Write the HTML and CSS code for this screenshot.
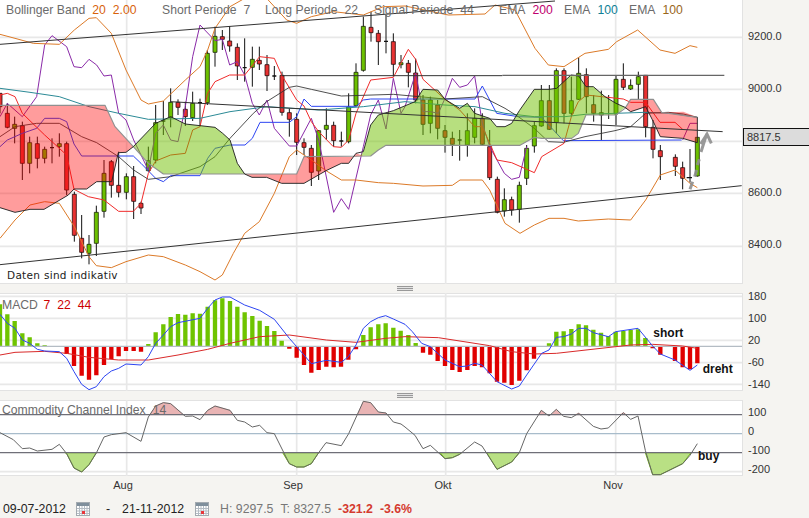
FILE: index.html
```html
<!DOCTYPE html>
<html lang="de">
<head>
<meta charset="utf-8">
<title>Chart</title>
<link rel="stylesheet" href="styles.css">
</head>
<body>
<main class="chart">
  <section class="pane pane-main">
    <div class="plot">
      <svg class="plot-svg" viewBox="0 0 2226 852" width="742" height="284">
        <g class="grid">
          <path d="M0 112H2226M0 268H2226M0 424H2226M0 580H2226M0 739H2226M380 0V852M890 0V852M1337 0V852M1847 0V852"/>
        </g>
        <path class="wick" d="M0 280V340M22 310V385M44 350V430M67 365V540M89 410V520M112 410V505M134 440V490M156 415V490M178 400V470M200 425V585M223 575V725M245 645V775M267 705V793M289 617V768M312 480V653M334 480V593M356 455V592M379 520V598M401 498V657M423 605V642M445 440V515M467 315V490M490 303V405M512 265V382M534 298V345M556 305V378M578 275V363M600 296V378M622 150V315M645 80V200M667 90V150M689 78V155M712 130V240M734 115V245M757 140V260M778 140V210M801 165V273M823 198V240M846 215V347M868 325V410M890 340V465M912 415V465M934 435V558M956 390V540M979 325V420M1001 365V440M1024 395V440M1046 280V430M1068 190V320M1090 50V215M1113 35V125M1135 90V195M1158 45V160M1180 100V230M1203 165V205M1225 180V262M1247 176V310M1269 285V405M1291 290V400M1313 300V418M1335 375V458M1357 395V468M1379 390V482M1402 340V470M1424 325V430M1447 340V435M1469 390V540M1492 530V640M1513 565V650M1535 590V647M1558 545V668M1580 435V555M1603 365V458M1624 255V380M1648 255V390M1669 205V400M1692 205V370M1714 230V350M1736 172V300M1759 205V340M1781 285V365M1804 272V420M1826 285V357M1848 225V375M1870 190V270M1892 238V270M1915 215V300M1937 225V412M1959 360V475M1981 435V540M2026 463V528M2048 485V568M2070 447V548M2092 412V530"/>
        <path class="body-green" d="M261 733h12v27h-12zM283 637h12v93h-12zM306 520h12v114h-12zM373 530h12v47h-12zM439 482h12v30h-12zM461 368h12v112h-12zM506 307h12v45h-12zM572 310h12v43h-12zM616 160h12v148h-12zM639 109h12v48h-12zM751 178h12v24h-12zM950 392h12v121h-12zM973 376h12v12h-12zM1040 321h12v104h-12zM1062 217h12v100h-12zM1084 79h12v132h-12zM1197 188h12v6h-12zM38 373h12v12h-12zM83 428h12v62h-12zM128 448h12v27h-12zM172 431h12v9h-12zM1285 300h12v70h-12zM1396 392h12v43h-12zM1418 355h12v57h-12zM1507 599h12v34h-12zM1552 556h12v72h-12zM1574 445h12v90h-12zM1597 377h12v61h-12zM1618 302h12v76h-12zM1663 212h12v155h-12zM1708 302h12v38h-12zM1730 220h12v78h-12zM1798 338h12v7h-12zM1842 238h12v104h-12zM1886 256h12v11h-12zM1909 230h12v23h-12zM2086 412h12v116h-12z"/>
        <path class="body-red" d="M-6 280h12v40h-12zM16 340h12v42h-12zM61 377h12v113h-12zM106 431h12v44h-12zM194 431h12v139h-12zM217 583h12v123h-12zM239 715h12v42h-12zM328 485h12v71h-12zM350 556h12v21h-12zM395 530h12v74h-12zM417 610h12v14h-12zM528 307h12v15h-12zM550 328h12v22h-12zM661 110h12v8h-12zM683 123h12v15h-12zM706 142h12v56h-12zM772 181h12v11h-12zM795 194h12v33h-12zM840 226h12v111h-12zM862 338h12v20h-12zM884 358h12v69h-12zM906 428h12v14h-12zM928 445h12v72h-12zM995 376h12v46h-12zM1107 82h12v16h-12zM1129 100h12v25h-12zM1174 125h12v68h-12zM1219 190h12v27h-12zM1241 219h12v81h-12zM1263 300h12v73h-12zM1307 315h12v70h-12zM1329 392h12v20h-12zM1351 415h12v18h-12zM1441 355h12v78h-12zM1463 440h12v93h-12zM1486 538h12v99h-12zM1529 599h12v31h-12zM1642 302h12v86h-12zM1686 212h12v128h-12zM1753 224h12v66h-12zM1775 314h12v26h-12zM1864 238h12v24h-12zM1931 226h12v154h-12zM1953 382h12v66h-12zM1975 452h12v18h-12zM2020 472h12v27h-12zM2042 503h12v32h-12z"/>
        <path class="dash" d="M150 443h12M484 363h12M594 308h12M728 203h12M817 228h12M1018 423h12M1152 124h12M1373 420h12M2060 533h16"/>
        <polyline class="ln purple" points="0,350 22,310 67,350 110,290 134,135 156,107 200,140 222,200 245,203 267,178 290,195 312,228 334,225 356,340 378,360 401,420 445,510 467,400 490,375 512,420 534,425 556,320 578,170 600,75 645,122 667,118 689,195 712,185 734,225 757,310 778,345 801,300 823,385 868,438 890,438 934,355 956,420 1001,637 1024,596 1046,628 1090,440 1112,345 1135,300 1158,387 1180,235 1203,340 1215,320 1247,220 1269,335 1291,335 1315,340 1335,295 1357,235 1379,262 1402,255 1424,228 1447,370 1469,440 1513,520 1535,538 1558,532 1580,440"/>
        <polyline class="ln purple" points="2048,420 2070,370 2092,370"/>
        <polyline class="ln blue" points="0,440 22,420 67,400 110,385 134,355 178,355 200,365 222,432 245,468 400,468 423,490 467,535 490,545 512,527 600,527 623,475 645,445 690,435 735,435 757,415 780,367 868,367 890,350 912,297 934,319 1068,319 1090,300 1112,297 1425,297 1447,258 1490,340 1555,350 1625,352 1690,422 2045,420"/>
        <polyline class="ln red" points="0,285 22,280 45,290 67,340 134,405 200,465 222,568 265,590 312,600 356,634 400,634 423,610 445,520 467,483 512,465 556,460 578,390 600,380 623,280 645,245 689,225 734,225 779,170 823,175 845,225 890,300 912,318 934,365 956,395 1000,440 1024,442 1046,420 1068,340 1112,240 1180,232 1225,148 1247,178 1269,238 1335,298 1379,330 1424,380 1447,380 1491,480 1535,488 1603,518 1625,470 1692,430 1714,350 1735,305 1759,285 1870,297 1892,307 1937,307 1980,367 2025,367 2048,388"/>
        <polyline class="ln orange" points="0,103 45,115 100,130 178,133 223,90 267,55 289,53 334,100 378,210 423,300 445,312 490,303 556,240 600,200 623,150 645,85 690,20 734,-5 800,-5 860,60 890,70 934,50 1000,35 1090,45 1150,20 1215,18 1345,45 1455,42 1485,15 1545,30 1605,145 1645,195 1692,200 1755,160 1825,148 1850,125 1913,90 1980,150 2025,160 2070,137 2092,142"/>
        <polyline class="ln orange" points="0,715 45,660 90,615 134,605 178,610 223,680 267,770 289,797 334,803 378,785 445,765 490,770 556,795 600,815 645,840 667,825 700,760 734,700 778,665 823,580 868,470 890,450 934,480 978,512 1024,540 1068,540 1135,548 1180,550 1269,558 1357,556 1380,540 1447,540 1469,570 1492,620 1515,670 1560,700 1603,675 1647,655 1692,655 1735,663 1825,657 1892,660 1937,600 1981,525 2025,510 2070,550 2092,563"/>
        <polyline class="ln teal" points="0,265 90,277 178,290 267,320 356,340 445,358 600,355 690,335 800,320 956,330 1090,320 1215,305 1335,315 1425,320 1515,340 1603,350 1695,350 1755,343 1935,337 2015,340 2092,352"/>
        <polyline class="ln thin" points="0,410 45,380 110,370 178,370 245,410 290,428 356,470 401,510 445,538 512,530 600,500 645,470 690,415 760,340 800,305 868,262 890,258 934,268 1024,288 1180,283 1335,297 1447,290 1515,325 1555,350 1603,385 1645,425 1690,427 1755,410 1845,392 1892,380 1937,340 2005,337 2050,342 2092,352"/>
        <polygon class="cloud-red" points="0,316 315,316 345,380 400,440 378,457 355,458 335,545 290,545 260,567 222,567 205,585 132,628 90,628 45,637 0,623"/>
        <polygon class="cloud-green" points="400,440 467,370 512,350 556,372 645,382 668,400 690,420 712,490 734,522 490,522 445,490"/>
        <polygon class="cloud-red" points="734,522 890,522 912,470 1068,470 1090,467 1068,460 1046,490 1024,490 978,512 912,550 845,550 800,532 756,532"/>
        <polygon class="cloud-green" points="1080,467 1090,455 1112,375 1135,345 1180,332 1245,305 1269,268 1313,270 1335,298 1379,325 1402,310 1424,340 1469,355 1490,380 1515,380 1535,370 1558,332 1603,268 1647,268 1670,265 1713,225 1736,228 1758,260 1780,260 1815,290 1848,310 1875,322 1848,345 1758,345 1735,400 1715,415 1625,415 1603,412 1560,436 1158,436 1135,450 1112,468"/>
        <polygon class="cloud-red" points="1875,325 1892,298 1960,298 1985,337 2005,337 2050,335 2092,352 2092,428 2048,415 1981,410 1960,365 1937,320 1892,335"/>
        <polyline class="edge-gray" points="0,316 315,316 345,380 400,440 445,490 490,522 890,522 912,470 1112,468 1135,450 1158,436 1560,436 1603,412 1625,415 1715,415 1735,400 1758,345 1848,345 1875,325 1892,298 1960,298 1985,337 2092,352"/>
        <polyline class="edge-black" points="0,623 45,637 90,628 132,628 205,585 222,567 260,567 290,545 335,545 355,458 378,457 400,440 467,370 512,350 556,372 645,382 668,400 690,420 712,490 734,522 756,532 800,532 845,550 912,550 978,512 1024,490 1046,490 1068,460 1090,455 1112,375 1135,345 1180,332 1245,305 1269,268 1313,270 1335,298 1379,325 1402,310 1424,340 1469,355 1490,380 1515,380 1535,370 1558,332 1603,268 1647,268 1670,265 1713,225 1736,228 1758,260 1780,260 1815,290 1848,310 1875,322 1892,335 1937,320 1960,365 1981,410 2048,415 2092,428 2092,352"/>
        <path class="trend" d="M0 133L1665 3M0 794L2225 557M845 227H1507M510 305L2168 395"/>
        <path class="trend-gray" d="M1507 226H2173"/>
        <path class="arrow" d="M2103 456L2120 402M2102 432L2121 402L2134 430"/>
        <path class="arrow-dash" d="M2070 568L2078 545M2084 530L2090 510M2092 495L2098 478"/>
      </svg>
      <div class="legend legend-main">
        <span class="item">Bollinger Band<b class="orange-t">20</b><b class="orange-t">2.00</b></span>
        <span class="item">Short Periode<b class="grey-t">7</b></span>
        <span class="item">Long Periode<b class="grey-t">22</b></span>
        <span class="item">Signal Periode<b class="grey-t">44</b></span>
        <span class="item">EMA<b class="pink-t">200</b></span>
        <span class="item">EMA<b class="teal-t">100</b></span>
        <span class="item">EMA<b class="brown-t">100</b></span>
      </div>
      <p class="note">Daten sind indikativ</p>
    </div>
    <div class="axis axis-main">
      <span class="tick">9200.0</span>
      <span class="tick">9000.0</span>
      <span class="tick"></span>
      <span class="tick">8600.0</span>
      <span class="tick">8400.0</span>
      <span class="price">8817.5</span>
    </div>
  </section>
  <div class="strip"><i class="handle"></i></div>
  <section class="pane pane-macd">
    <div class="plot">
      <svg class="plot-svg" viewBox="0 24 2226 294" width="742" height="98">
        <path class="grid-line" d="M0 34H2226M0 100H2226M0 166H2226M0 233H2226M0 298H2226M380 24V318M890 24V318M1337 24V318M1847 24V318"/>
        <path class="bar-green" d="M0 58V184M22 88V184M44 108V184M67 145V184M89 157V184M112 175V184M134 181V184M445 177V184M467 142V184M490 118V184M512 96V184M534 87V184M556 89V184M578 85V184M600 86V184M623 65V184M645 46V184M667 40V184M690 48V184M712 65V184M734 82V184M757 93V184M779 107V184M801 123V184M823 138V184M845 167V184M1090 150V184M1112 127V184M1135 118V184M1157 115V184M1180 128V184M1202 137V184M1225 150V184M1247 174V184M1647 175V184M1669 140V184M1691 139V184M1714 132V184M1736 118V184M1758 121V184M1780 134V184M1803 143V184M1825 153V184M1847 140V184M1870 138V184M1892 135V184M1914 133V184M1936 159V184"/>
        <path class="bar-red" d="M200 184V207M222 184V243M245 184V272M267 184V284M289 184V271M312 184V240M334 184V222M356 184V214M378 184V198M401 184V198M423 184V200M868 184V191M890 184V218M912 184V240M934 184V263M956 184V255M979 184V245M1001 184V247M1023 184V245M1045 184V224M1068 184V193M1269 184V203M1291 184V209M1313 184V228M1335 184V243M1357 184V255M1379 184V261M1402 184V255M1424 184V243M1446 184V247M1469 184V265M1491 184V290M1513 184V293M1535 184V300M1558 184V287M1580 184V256M1602 184V221M1958 184V190M1981 184V209M2025 184V228M2048 184V247M2070 184V253M2092 184V235"/>
        <path class="zero" d="M0 184H2226"/>
        <polyline class="ln macd-red" points="0,210 45,202 134,199 200,205 267,217 356,225 445,225 534,210 623,193 690,175 779,155 868,150 979,165 1068,172 1157,160 1215,155 1315,158 1469,182 1535,200 1602,207 1669,205 1758,195 1892,180 1958,178 2048,183 2092,190"/>
        <polyline class="ln blue" points="0,88 22,115 45,130 67,165 89,175 112,193 134,198 178,200 200,220 222,260 245,298 267,314 289,305 312,275 334,258 356,250 378,237 423,240 445,215 467,175 490,150 512,125 534,113 600,100 623,70 645,45 667,36 690,36 734,60 779,76 823,103 868,160 890,185 912,210 934,236 979,226 1024,232 1045,215 1068,180 1090,130 1112,110 1135,98 1157,92 1180,102 1215,118 1237,140 1265,175 1291,185 1335,225 1379,245 1402,243 1424,235 1446,240 1491,290 1535,312 1558,303 1580,270 1625,205 1647,195 1669,157 1691,155 1714,147 1736,130 1758,130 1780,143 1825,155 1847,140 1914,130 1958,183 1981,207 2025,225 2070,256 2092,240"/>
        <text class="mark" x="1960" y="157">short</text>
        <text class="mark" x="2108" y="265">dreht</text>
      </svg>
      <p class="legend legend-sub"><span class="word">MACD</span><b class="red-t">7</b><b class="red-t">22</b><b class="red-t">44</b></p>
    </div>
    <div class="axis axis-macd">
      <span class="tick">180</span>
      <span class="tick">100</span>
      <span class="tick">20</span>
      <span class="tick">-60</span>
      <span class="tick">-140</span>
    </div>
  </section>
  <div class="strip"><i class="handle"></i></div>
  <section class="pane pane-cci">
    <div class="plot">
      <svg class="plot-svg" viewBox="0 344 2226 228" width="742" height="76">
        <path class="grid-line" d="M0 559H2226M380 344V572M890 344V572M1337 344V572M1847 344V572"/>
        <path class="fill-pink" d="M450 388L467 362 490 352 512 355 550 388zM610 388L623 375 645 362 690 375 700 388zM1072 388L1090 348 1112 352 1135 380 1158 383 1163 388zM1615 388L1624 375 1638 388zM1655 388L1669 372 1685 388zM1725 388L1736 384 1745 388zM1860 388L1870 382 1880 388z"/>
        <path class="fill-green" d="M195 502L200 505 222 548 245 560 267 538 289 502zM848 502L868 535 890 545 912 545 934 535 956 502zM1320 502L1335 520 1357 517 1379 507 1385 502zM1460 502L1491 552 1535 530 1558 502zM1936 502L1958 568 1981 568 2048 535 2073 502z"/>
        <path class="level" d="M0 388H2226M0 502H2226"/>
        <path class="level-mid" d="M0 445H2226"/>
        <polyline class="ln cci" points="0,442 40,463 67,490 89,488 112,497 156,492 178,477 200,505 222,548 245,560 267,538 289,503 312,455 334,448 378,442 423,468 445,395 467,362 490,352 512,355 556,393 578,392 600,403 623,375 645,362 690,375 712,405 734,410 757,425 779,420 801,442 823,445 868,535 890,545 912,545 934,535 956,502 978,472 1024,481 1046,445 1090,348 1112,352 1135,380 1158,383 1180,410 1203,416 1215,425 1245,450 1269,490 1291,480 1335,520 1357,517 1379,507 1424,470 1446,482 1491,552 1535,530 1558,502 1580,445 1624,375 1647,392 1669,372 1691,393 1714,397 1736,384 1780,423 1803,431 1825,428 1870,382 1892,402 1914,392 1936,495 1958,568 1981,568 2048,535 2070,510 2092,475"/>
        <text class="mark" x="2094" y="525">buy</text>
      </svg>
      <p class="legend legend-sub legend-cci">Commodity Channel Index<b class="grey-t">14</b></p>
    </div>
    <div class="axis axis-cci">
      <span class="tick">100</span>
      <span class="tick">0</span>
      <span class="tick">-100</span>
      <span class="tick">-200</span>
    </div>
  </section>
  <div class="months">
    <span class="month">Aug</span>
    <span class="month m-sep">Sep</span>
    <span class="month m-okt">Okt</span>
    <span class="month m-nov">Nov</span>
  </div>
  <footer class="range">
    <span class="date">09-07-2012</span>
    <svg class="cal" viewBox="0 0 14 14" width="14" height="14"><rect x=".5" y=".5" width="13" height="13" fill="#fff" stroke="#a3aab0"/><rect x="1" y="1" width="12" height="3" fill="#7f8f9c"/><path d="M1 6.500H13M1 9H13M1 11.500H13M3.500 4V13M6 4V13M8.500 4V13M11 4V13" stroke="#b4bcc4" fill="none"/><rect x="6" y="9" width="3" height="3" fill="#e8353a"/></svg>
    <span class="sep">-</span>
    <span class="date">21-11-2012</span>
    <svg class="cal" viewBox="0 0 14 14" width="14" height="14"><rect x=".5" y=".5" width="13" height="13" fill="#fff" stroke="#a3aab0"/><rect x="1" y="1" width="12" height="3" fill="#7f8f9c"/><path d="M1 6.500H13M1 9H13M1 11.500H13M3.500 4V13M6 4V13M8.500 4V13M11 4V13" stroke="#b4bcc4" fill="none"/><rect x="6" y="9" width="3" height="3" fill="#e8353a"/></svg>
    <span class="stat stat-h">H: 9297.5</span>
    <span class="stat stat-t">T: 8327.5</span>
    <strong class="loss">-321.2</strong>
    <strong class="loss loss-pct">-3.6%</strong>
  </footer>
</main>
</body>
</html>
```
FILE: styles.css
```css
* { box-sizing: border-box; }
html, body { margin: 0; padding: 0; }
body {
  width: 809px;
  height: 518px;
  overflow: hidden;
  background: #f5f4f1;
  font-family: "Liberation Sans", Arial, sans-serif;
}
p { margin: 0; }
.chart { display: flex; flex-direction: column; }
.pane { display: flex; }
.pane-main { height: 284px; }
.pane-macd { height: 98px; }
.pane-cci { height: 76px; }
.plot {
  position: relative;
  width: 743px;
  flex: none;
  background: #fff;
  border-right: 1px solid #e2e2e2;
  border-bottom: 1px solid #e2e2e2;
}
.pane-macd .plot, .pane-cci .plot { border-top: 1px solid #e2e2e2; }
.plot-svg { display: block; overflow: hidden; }
.pane-macd .plot-svg, .pane-cci .plot-svg { margin-top: -1px; }

.grid path, .grid-line { fill: none; stroke: #e8e8e8; stroke-width: 5; }
.wick { fill: none; stroke: #111; stroke-width: 3; }
.body-green { fill: #6cc000; stroke: #1d2a0a; stroke-width: 2.4; }
.body-red { fill: #e83232; stroke: #2a0c0c; stroke-width: 2.4; }
.dash { fill: none; stroke: #111; stroke-width: 4; }
.ln { fill: none; stroke-width: 3; stroke-linejoin: round; }
.purple { stroke: #8a2aa8; }
.blue { stroke: #2d45f2; }
.red { stroke: #f02b2b; }
.orange { stroke: #dc7a28; }
.teal { stroke: #2b8a96; }
.thin { stroke: #333; stroke-width: 2.6; }
.cci { stroke: #666; }
.macd-red { stroke: #d92a2a; }
.cloud-red { fill: rgba(255, 0, 0, .39); }
.cloud-green { fill: rgba(112, 192, 0, .5); }
.edge-gray { fill: none; stroke: #909090; stroke-width: 3.4; stroke-linejoin: round; }
.edge-black { fill: none; stroke: #222; stroke-width: 2.8; stroke-linejoin: round; }
.trend { fill: none; stroke: #333; stroke-width: 3; }
.trend-gray { fill: none; stroke: #666; stroke-width: 3.6; }
.arrow, .arrow-dash { fill: none; stroke: #8e8e8e; stroke-width: 9; stroke-linejoin: miter; opacity: .9; }
.bar-green { fill: none; stroke: #6fc400; stroke-width: 13; }
.bar-red { fill: none; stroke: #e00000; stroke-width: 13; }
.zero { fill: none; stroke: #b4bcc4; stroke-width: 3.5; }
.level { fill: none; stroke: #6f6f78; stroke-width: 3.6; }
.level-mid { fill: none; stroke: #a8bccb; stroke-width: 3.6; }
.fill-pink { fill: #e9b4b4; stroke: #e9a9a9; stroke-width: 2; }
.fill-green { fill: #b9e084; stroke: #73bf10; stroke-width: 3; }
.mark { font: bold 36px "Liberation Sans", Arial, sans-serif; fill: #111; }

.legend {
  position: absolute;
  top: 2px;
  left: 6px;
  font-size: 12.200px;
  line-height: 16px;
  color: #6b6b6b;
  white-space: nowrap;
}
.legend-main {
  display: grid;
  grid-template-columns: 156px 103px 109px 125px 65px 65px auto;
}
.legend b { font-weight: normal; margin-left: 7px; }
.word { margin-right: -1.500px; }
.orange-t { color: #d8620a; }
.grey-t { color: #6b6b6b; }
.pink-t { color: #c0006e; }
.teal-t { color: #0e7f96; }
.brown-t { color: #99661a; }
.red-t { color: #cc0000; }
.legend-sub { left: 2px; top: 3px; }
.legend-cci { top: 1px; }
.note {
  position: absolute;
  left: 7px;
  top: 268px;
  font: 10.500px/14px "DejaVu Sans", sans-serif;
  letter-spacing: .3px;
  color: #222;
}

.axis {
  position: relative;
  flex: 1;
  display: flex;
  flex-direction: column;
  padding-left: 5px;
  font-size: 11px;
  color: #333;
}
.axis-main { padding-top: 10px; }
.axis-main .tick { height: 52px; line-height: 52px; }
.axis-macd { margin-top: -8px; }
.axis-macd .tick { height: 22px; line-height: 22px; }
.axis-cci { padding-top: 3px; }
.axis-cci .tick { height: 19px; line-height: 19px; }
.price {
  position: absolute;
  left: 0;
  right: 0;
  top: 128px;
  height: 18px;
  line-height: 16px;
  padding-left: 3px;
  background: #dcdcdc;
  border: 1px solid #111;
  border-right: 0;
}
.strip { height: 9px; display: flex; justify-content: center; align-items: center; }
.handle {
  display: block;
  width: 16px;
  height: 5px;
  background: repeating-linear-gradient(#999 0 1px, #e4e4e4 1px 2px);
}
.months {
  display: flex;
  height: 14px;
  padding: 2px 0 0 103px;
  font-size: 11px;
  line-height: 14px;
  color: #333;
}
.month { width: 40px; text-align: center; }
.m-sep { margin-left: 130px; }
.m-okt { margin-left: 110px; }
.m-nov { margin-left: 130px; }
.range {
  display: flex;
  align-items: center;
  height: 16px;
  margin-top: 11px;
  padding-left: 3px;
  font-size: 12.300px;
  color: #222;
}
.date { width: 64px; flex: none; white-space: nowrap; }
.cal { margin-left: 9px; flex: none; }
.sep { margin-left: 16px; margin-right: 12px; }
.stat { color: #777; white-space: nowrap; }
.stat-h { margin-left: 11px; }
.stat-t { margin-left: 7px; }
.loss { color: #d43a2f; margin-left: 7px; white-space: nowrap; }
.loss-pct { margin-left: 7px; }
```
